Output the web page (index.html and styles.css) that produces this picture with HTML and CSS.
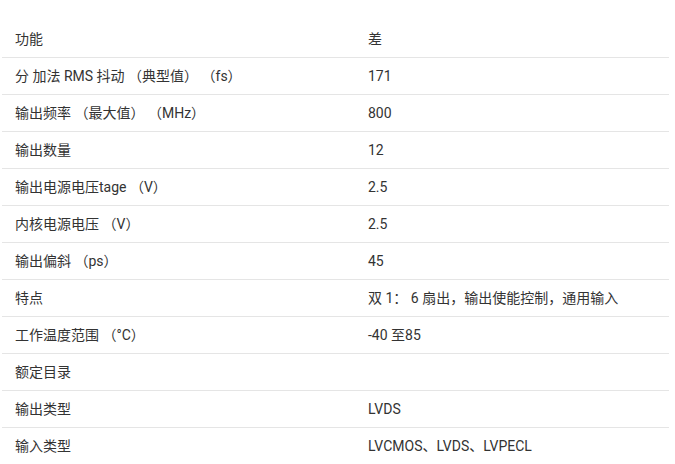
FILE: index.html
```html
<!DOCTYPE html>
<html lang="zh-CN">
<head>
<meta charset="utf-8">
<link rel="stylesheet" href="styles.css">
</head>
<body>
<div class="specs">
  <div class="row"><div class="cell key">功能</div><div class="cell val">差</div></div>
  <div class="row"><div class="cell key">分 加法 RMS 抖动 （典型值） （fs）</div><div class="cell val">171</div></div>
  <div class="row"><div class="cell key">输出频率 （最大值） （MHz）</div><div class="cell val">800</div></div>
  <div class="row"><div class="cell key">输出数量</div><div class="cell val">12</div></div>
  <div class="row"><div class="cell key">输出电源电压tage （V）</div><div class="cell val">2.5</div></div>
  <div class="row"><div class="cell key">内核电源电压 （V）</div><div class="cell val">2.5</div></div>
  <div class="row"><div class="cell key">输出偏斜 （ps）</div><div class="cell val">45</div></div>
  <div class="row"><div class="cell key">特点</div><div class="cell val">双 1： 6 扇出，输出使能控制，通用输入</div></div>
  <div class="row"><div class="cell key">工作温度范围 （°C）</div><div class="cell val">-40 至85</div></div>
  <div class="row"><div class="cell key">额定目录</div><div class="cell val"></div></div>
  <div class="row"><div class="cell key">输出类型</div><div class="cell val">LVDS</div></div>
  <div class="row"><div class="cell key">输入类型</div><div class="cell val">LVCMOS、LVDS、LVPECL</div></div>
</div>
</body>
</html>
```
FILE: styles.css
```css
html, body {
  margin: 0;
  padding: 0;
  background: #fff;
}
body {
  font-family: Roboto, "Noto Sans CJK SC", sans-serif;
  font-size: 14px;
  color: #333;
}
.specs {
  margin: 21px 0 0 2px;
  width: 667px;
}
.row {
  display: grid;
  grid-template-columns: 353px 1fr;
  height: 36px;
  border-bottom: 1px solid #e5e5e5;
  align-items: center;
}
.cell {
  padding-left: 13px;
  white-space: nowrap;
  line-height: 20px;
}
```
